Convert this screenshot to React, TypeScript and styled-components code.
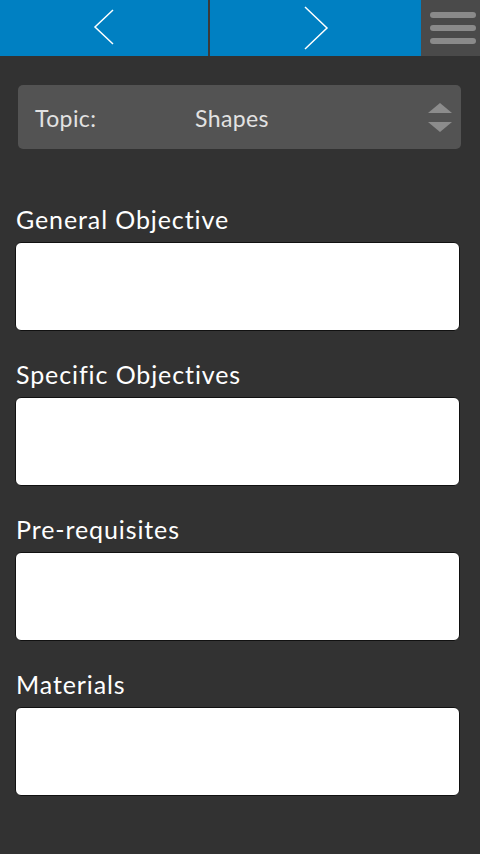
import React from "react";
import styled, { createGlobalStyle } from "styled-components";

const Global = createGlobalStyle`
  html, body { margin: 0; padding: 0; background: #323232; }
  body { width: 480px; height: 854px; overflow: hidden; font-family: Lato, "Open Sans", sans-serif; }
`;

const Page = styled.div`
  width: 480px;
  height: 854px;
  background: #323232;
  display: flex;
  flex-direction: column;
`;

const Header = styled.div`
  height: 56px;
  display: flex;
  background: #4a4a4a;
`;

const NavButton = styled.div<{ $w: number }>`
  width: ${(p) => p.$w}px;
  height: 56px;
  background: #0080c2;
  display: flex;
  align-items: center;
  justify-content: center;
`;

const Divider = styled.div`
  width: 2px;
  background: #3a3a3a;
`;

const Menu = styled.div`
  flex: 1;
  display: flex;
  flex-direction: column;
  justify-content: center;
  gap: 7px;
  padding: 0 4px 0 9px;
`;

const MenuBar = styled.div`
  height: 6px;
  border-radius: 3px;
  background: #8a8a8a;
`;

const Content = styled.div`
  padding: 29px 20px 0 15px;
  display: flex;
  flex-direction: column;
`;

const TopicBox = styled.div`
  margin-left: 3px;
  margin-right: -1px;
  height: 64px;
  border-radius: 5px;
  background: #535353;
  display: flex;
  align-items: center;
  padding: 2px 8px 0 17px;
  color: #e2e2e2;
  font-size: 23px;
  letter-spacing: 0.4px;
  margin-bottom: 55px;
  box-sizing: border-box;
`;

const TopicLabel = styled.span`
  width: 160px;
`;

const TopicValue = styled.span`
  flex: 1;
`;

const Section = styled.div`
  display: flex;
  flex-direction: column;
  margin-bottom: 28px;
`;

const Label = styled.div`
  color: #ffffff;
  font-size: 25px;
  line-height: 30px;
  letter-spacing: 0.9px;
  font-variant-ligatures: none;
  padding-left: 1px;
  margin-bottom: 8px;
`;

const Field = styled.div`
  height: 87px;
  background: #ffffff;
  border: 1px solid #111;
  border-radius: 6px;
`;

const Chevron = ({ dir }: { dir: "l" | "r" }) =>
  dir === "l" ? (
    <svg width="22" height="40" viewBox="0 0 22 40">
      <polyline points="20,2 2,19 20,36" fill="none" stroke="#fff" strokeWidth="1.5" />
    </svg>
  ) : (
    <svg width="26" height="46" viewBox="0 0 26 46">
      <polyline points="2,2 24,23 2,44" fill="none" stroke="#fff" strokeWidth="1.5" />
    </svg>
  );

const Spinner = () => (
  <svg width="26" height="32" viewBox="0 0 26 32">
    <polygon points="1,11 13,1 25,11" fill="#8c8c8c" />
    <polygon points="1,20 13,30 25,20" fill="#8c8c8c" />
  </svg>
);

const sections = ["General Objective", "Specific Objectives", "Pre-requisites", "Materials"];

export default function App() {
  return (
    <Page>
      <Global />
      <Header>
        <NavButton $w={208}>
          <Chevron dir="l" />
        </NavButton>
        <Divider />
        <NavButton $w={211}>
          <Chevron dir="r" />
        </NavButton>
        <Menu>
          <MenuBar />
          <MenuBar />
          <MenuBar />
        </Menu>
      </Header>
      <Content>
        <TopicBox>
          <TopicLabel>Topic:</TopicLabel>
          <TopicValue>Shapes</TopicValue>
          <Spinner />
        </TopicBox>
        {sections.map((s) => (
          <Section key={s}>
            <Label>{s}</Label>
            <Field />
          </Section>
        ))}
      </Content>
    </Page>
  );
}
